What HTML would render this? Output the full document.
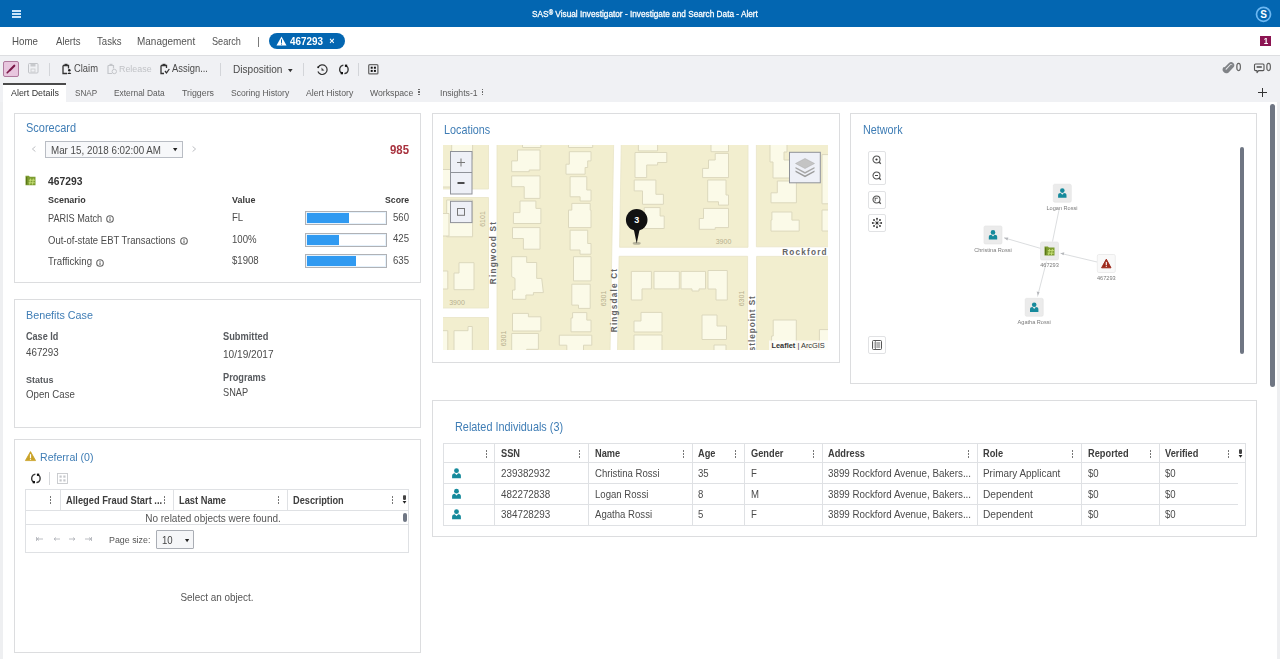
<!DOCTYPE html>
<html><head><meta charset="utf-8"><title>SAS Visual Investigator</title>
<style>
html,body{margin:0;padding:0;width:1280px;height:659px;overflow:hidden;background:#fff;}
body{position:relative;font-family:"Liberation Sans",sans-serif;}
.t{position:absolute;white-space:nowrap;line-height:1;will-change:transform;}
.r{position:absolute;box-sizing:border-box;}
svg.r{overflow:visible;}
</style></head><body>
<div class="r" style="left:0px;top:0px;width:1280px;height:27px;background:#0366b1;"></div>
<div class="r" style="left:0px;top:27px;width:1280px;height:28px;background:#fff;"></div>
<div class="r" style="left:0px;top:55px;width:1280px;height:47px;background:#f0f1f4;"></div>
<div class="r" style="left:0px;top:55px;width:1280px;height:1px;background:#dddee1;"></div>
<div class="r" style="left:0px;top:102px;width:3px;height:557px;background:#eeeff1;"></div>
<div class="r" style="left:1277px;top:102px;width:3px;height:557px;background:#eeeff1;"></div>
<div class="r" style="left:1270px;top:104px;width:5px;height:283px;background:#6f7683;border-radius:3px;"></div>
<div class="r" style="left:12px;top:10px;width:9px;height:2px;background:#c9e4fa;"></div>
<div class="r" style="left:12px;top:13px;width:9px;height:2px;background:#c9e4fa;"></div>
<div class="r" style="left:12px;top:16px;width:9px;height:2px;background:#c9e4fa;"></div>
<div class="t" style="left:644.60px;top:11.00px;font-size:8.25px;color:#ffffff;transform:translateX(-50%) scaleY(1.1);transform-origin:50% 6px;-webkit-text-stroke:0.25px #fff;">SAS<span style="font-size:6px;position:relative;top:-1.8px">®</span> Visual Investigator - Investigate and Search Data - Alert</div>
<svg class="r" style="left:1255px;top:5.5px;" width="17" height="17" viewBox="0 0 17 17"><circle cx="8.5" cy="8.3" r="7" fill="none" stroke="#6db8f2" stroke-width="1.7"/><text x="8.6" y="11.9" text-anchor="middle" font-family="Liberation Sans" font-weight="700" font-size="10" fill="#fff">S</text></svg>
<div class="t" style="left:12.00px;top:37.00px;font-size:9.75px;color:#525252;transform:scaleY(1.1);transform-origin:50% 8px;">Home</div>
<div class="t" style="left:55.50px;top:37.00px;font-size:9.6px;color:#525252;transform:scaleY(1.1);transform-origin:50% 8px;">Alerts</div>
<div class="t" style="left:96.50px;top:37.00px;font-size:9.6px;color:#525252;transform:scaleY(1.1);transform-origin:50% 8px;">Tasks</div>
<div class="t" style="left:136.50px;top:37.00px;font-size:9.97px;color:#525252;transform:scaleY(1.1);transform-origin:50% 8px;">Management</div>
<div class="t" style="left:211.50px;top:38.00px;font-size:9.15px;color:#525252;transform:scaleY(1.1);transform-origin:50% 7px;">Search</div>
<div class="r" style="left:258px;top:37px;width:1px;height:10px;background:#7a7a7a;"></div>
<div class="r" style="left:269px;top:33px;width:76px;height:16px;background:#0366b1;border-radius:8px;"></div>
<svg class="r" style="left:276px;top:36px;" width="11" height="10" viewBox="0 0 11 10"><path d="M5.5 0.5 L10.5 9.5 L0.5 9.5 Z" fill="#fff"/><rect x="5" y="3.3" width="1" height="3.6" fill="#0366b1"/><rect x="5" y="7.6" width="1" height="1" fill="#0366b1"/></svg>
<div class="t" style="left:290.00px;top:37.00px;font-size:9.89px;color:#fff;font-weight:700;transform:scaleY(1.1);transform-origin:50% 8px;">467293</div>
<div class="t" style="left:332.00px;top:37.00px;font-size:9px;color:#fff;font-weight:700;transform:translateX(-50%) scaleY(1.1);transform-origin:50% 7px;">×</div>
<div class="r" style="left:1260px;top:36px;width:11px;height:10px;background:#8c1452;"></div>
<div class="t" style="left:1265.50px;top:38.00px;font-size:8px;color:#fff;font-weight:700;transform:translateX(-50%) scaleY(1.1);transform-origin:50% 6px;">1</div>
<div class="r" style="left:3px;top:61px;width:16px;height:16px;background:#e8c6de;border:1px solid #b07a9e;border-radius:2px;"></div>
<svg class="r" style="left:5px;top:63px;" width="12" height="12" viewBox="0 0 12 12"><path d="M4.6 7.4 L9.3 2.7" stroke="#7b1848" stroke-width="2.1" stroke-linecap="round"/><path d="M2.2 9.8 L3.6 8.4" stroke="#7b1848" stroke-width="1.6" stroke-linecap="round"/></svg>
<svg class="r" style="left:28px;top:63px;" width="11" height="11" viewBox="0 0 11 11"><rect x="0.5" y="0.5" width="9.5" height="9.5" rx="1" fill="none" stroke="#c2c4c8" stroke-width="1"/><rect x="2.5" y="1" width="5" height="2.5" fill="#c8cacd"/><rect x="3" y="6" width="4" height="3" fill="none" stroke="#c8cacd" stroke-width="0.8"/></svg>
<div class="r" style="left:49px;top:63px;width:1px;height:13px;background:#d3d5d9;"></div>
<svg class="r" style="left:61px;top:63px;" width="11" height="12" viewBox="0 0 11 12"><path d="M2 2.5 H7.5 V5.5 M2 2.5 V10.5 H6" fill="none" stroke="#333" stroke-width="1.3"/><rect x="3.5" y="0.8" width="3" height="2" fill="#333"/><circle cx="8.3" cy="7.3" r="1.3" fill="#222"/><path d="M6.3 11 Q8.3 8.2 10.3 11 Z" fill="#222"/></svg>
<div class="t" style="left:74.20px;top:64.00px;font-size:9.4px;color:#4a4a4a;transform:scaleY(1.1);transform-origin:50% 8px;">Claim</div>
<svg class="r" style="left:106px;top:63px;" width="11" height="12" viewBox="0 0 11 12"><path d="M2 2.5 H7.5 V5.5 M2 2.5 V10.5 H6" fill="none" stroke="#c4c6ca" stroke-width="1.2"/><rect x="3.5" y="0.8" width="3" height="2" fill="#c4c6ca"/><circle cx="8.3" cy="8.5" r="2.2" fill="none" stroke="#c4c6ca" stroke-width="1"/></svg>
<div class="t" style="left:118.90px;top:65.00px;font-size:8.9px;color:#c0c2c6;transform:scaleY(1.1);transform-origin:50% 7px;">Release</div>
<svg class="r" style="left:159px;top:63px;" width="11" height="12" viewBox="0 0 11 12"><path d="M2 2.5 H7.5 V5 M2 2.5 V10.5 H5" fill="none" stroke="#333" stroke-width="1.3"/><rect x="3.5" y="0.8" width="3" height="2" fill="#333"/><path d="M6 8 L7.5 10 L10.3 6" fill="none" stroke="#333" stroke-width="1.3"/></svg>
<div class="t" style="left:171.90px;top:64.00px;font-size:9.4px;color:#4a4a4a;transform:scaleY(1.1);transform-origin:50% 8px;">Assign...</div>
<div class="r" style="left:220px;top:63px;width:1px;height:13px;background:#d3d5d9;"></div>
<div class="t" style="left:232.50px;top:65.00px;font-size:10.1px;color:#4a4a4a;transform:scaleY(1.1);transform-origin:50% 8px;">Disposition</div>
<svg class="r" style="left:287.5px;top:68.8px;" width="5" height="3.5" viewBox="0 0 5 3.5"><path d="M0 0 H4.6 L2.3 3.2 Z" fill="#333"/></svg>
<div class="r" style="left:303px;top:63px;width:1px;height:13px;background:#d3d5d9;"></div>
<svg class="r" style="left:316px;top:63px;" width="12" height="13" viewBox="0 0 12 13"><path d="M2.2 4.2 A4.8 4.8 0 1 1 1.9 8.6" fill="none" stroke="#333" stroke-width="1.2"/><circle cx="2.2" cy="4.2" r="1" fill="#222"/><path d="M5.4 4.6 L8.4 7.4 L5.6 7.8 Z" fill="#444"/></svg>
<svg class="r" style="left:337.5px;top:63px;" width="12" height="13" viewBox="0 0 12 13"><path d="M5.4 2.1 A4.3 4.3 0 0 0 3.8 10.1" fill="none" stroke="#3a3a3a" stroke-width="1.3"/><path d="M8 2.7 A4.3 4.3 0 0 1 6.4 10.7" fill="none" stroke="#3a3a3a" stroke-width="1.3"/><rect x="6.9" y="1.6" width="2.3" height="2.3" fill="#111"/><rect x="2.7" y="9" width="2.3" height="2.3" fill="#111"/></svg>
<div class="r" style="left:358px;top:63px;width:1px;height:13px;background:#d3d5d9;"></div>
<svg class="r" style="left:367.5px;top:64px;" width="11" height="11" viewBox="0 0 11 11"><rect x="0.7" y="0.7" width="9.2" height="9.2" rx="1" fill="none" stroke="#6a6a6a" stroke-width="1.3"/><rect x="2.7" y="2.7" width="2" height="2" fill="#111"/><rect x="5.9" y="2.7" width="2" height="2" fill="#111"/><rect x="2.7" y="5.9" width="2" height="2" fill="#111"/><rect x="5.9" y="5.9" width="2" height="2" fill="#111"/></svg>
<svg class="r" style="left:1223px;top:62px;" width="11" height="12" viewBox="0 0 11 12"><path d="M8.3 3.6 L4 8.4 A1.5 1.5 0 0 1 1.9 6.3 L6.6 1.6 A2.2 2.2 0 0 1 9.8 4.6 L4.8 9.9 A2.8 2.8 0 0 1 1 6" fill="none" stroke="#808387" stroke-width="1.9" stroke-linecap="round"/></svg>
<div class="t" style="left:1236.00px;top:63.00px;font-size:9.4px;color:#5a5a5a;transform:scaleY(1.1);transform-origin:50% 8px;-webkit-text-stroke:0.3px #5a5a5a;">0</div>
<svg class="r" style="left:1253.5px;top:62.5px;" width="12" height="11" viewBox="0 0 12 11"><path d="M1.5 1 H9 A1 1 0 0 1 10 2 V6.6 A1 1 0 0 1 9 7.6 H4.6 L3 9.6 V7.6 H1.5 A1 1 0 0 1 0.5 6.6 V2 A1 1 0 0 1 1.5 1 Z" fill="none" stroke="#555" stroke-width="1.1" stroke-linejoin="round"/><rect x="2.6" y="3.2" width="5.2" height="1.6" fill="#555"/></svg>
<div class="t" style="left:1266.00px;top:63.00px;font-size:9.4px;color:#5a5a5a;transform:scaleY(1.1);transform-origin:50% 8px;-webkit-text-stroke:0.3px #5a5a5a;">0</div>
<div class="r" style="left:3px;top:84px;width:63px;height:18px;background:#fff;"></div>
<div class="r" style="left:3px;top:83px;width:63px;height:1.6px;background:#4a4a4a;"></div>
<div class="t" style="left:11.20px;top:89.00px;font-size:8.9px;color:#333;transform:scaleY(1.1);transform-origin:50% 7px;">Alert Details</div>
<div class="t" style="left:75.00px;top:90.00px;font-size:8.1px;color:#5b5b5b;transform:scaleY(1.1);transform-origin:50% 6px;">SNAP</div>
<div class="t" style="left:114.00px;top:89.00px;font-size:8.37px;color:#5b5b5b;transform:scaleY(1.1);transform-origin:50% 7px;">External Data</div>
<div class="t" style="left:182.00px;top:89.00px;font-size:8.82px;color:#5b5b5b;transform:scaleY(1.1);transform-origin:50% 7px;">Triggers</div>
<div class="t" style="left:230.60px;top:89.00px;font-size:8.61px;color:#5b5b5b;transform:scaleY(1.1);transform-origin:50% 7px;">Scoring History</div>
<div class="t" style="left:306.00px;top:89.00px;font-size:8.7px;color:#5b5b5b;transform:scaleY(1.1);transform-origin:50% 7px;">Alert History</div>
<div class="t" style="left:370.00px;top:89.00px;font-size:8.7px;color:#5b5b5b;transform:scaleY(1.1);transform-origin:50% 7px;">Workspace</div>
<div class="t" style="left:440.00px;top:89.00px;font-size:8.7px;color:#5b5b5b;transform:scaleY(1.1);transform-origin:50% 7px;">Insights-1</div>
<div class="r" style="left:418px;top:88.5px;width:1.5px;height:1.6px;background:#6a6a6a;"></div>
<div class="r" style="left:418px;top:91.2px;width:1.5px;height:1.6px;background:#6a6a6a;"></div>
<div class="r" style="left:418px;top:93.9px;width:1.5px;height:1.6px;background:#6a6a6a;"></div>
<div class="r" style="left:481.5px;top:88.5px;width:1.5px;height:1.6px;background:#6a6a6a;"></div>
<div class="r" style="left:481.5px;top:91.2px;width:1.5px;height:1.6px;background:#6a6a6a;"></div>
<div class="r" style="left:481.5px;top:93.9px;width:1.5px;height:1.6px;background:#6a6a6a;"></div>
<div class="r" style="left:1258.3px;top:92.2px;width:9px;height:1.3px;background:#333;"></div>
<div class="r" style="left:1262.2px;top:88.3px;width:1.3px;height:9.2px;background:#333;"></div>
<div class="r" style="left:14px;top:113px;width:407px;height:170px;border:1px solid #dcdddf;background:#fff;"></div>
<div class="r" style="left:14px;top:299px;width:407px;height:129px;border:1px solid #dcdddf;background:#fff;"></div>
<div class="r" style="left:14px;top:439px;width:407px;height:214px;border:1px solid #dcdddf;background:#fff;"></div>
<div class="r" style="left:432px;top:113px;width:408px;height:250px;border:1px solid #dcdddf;background:#fff;"></div>
<div class="r" style="left:850px;top:113px;width:407px;height:271px;border:1px solid #dcdddf;background:#fff;"></div>
<div class="r" style="left:432px;top:400px;width:825px;height:137px;border:1px solid #dcdddf;background:#fff;"></div>
<div class="t" style="left:25.80px;top:123.00px;font-size:10.97px;color:#3f7db5;transform:scaleY(1.1);transform-origin:50% 9px;">Scorecard</div>
<div class="t" style="left:25.60px;top:310.00px;font-size:10.76px;color:#3f7db5;transform:scaleY(1.1);transform-origin:50% 9px;">Benefits Case</div>
<div class="t" style="left:39.50px;top:452.00px;font-size:10.58px;color:#3f7db5;transform:scaleY(1.1);transform-origin:50% 9px;">Referral (0)</div>
<div class="t" style="left:444.30px;top:125.00px;font-size:10.8px;color:#3f7db5;transform:scaleY(1.1);transform-origin:50% 9px;">Locations</div>
<div class="t" style="left:862.50px;top:125.00px;font-size:10.8px;color:#3f7db5;transform:scaleY(1.1);transform-origin:50% 9px;">Network</div>
<div class="t" style="left:455.30px;top:422.00px;font-size:10.86px;color:#3f7db5;transform:scaleY(1.1);transform-origin:50% 9px;">Related Individuals (3)</div>
<svg class="r" style="left:31px;top:145px;" width="6" height="9" viewBox="0 0 6 9"><path d="M4.4 1.5 L1.4 4 L4.4 6.5" fill="none" stroke="#bfc1c5" stroke-width="1"/></svg>
<svg class="r" style="left:191px;top:145px;" width="6" height="9" viewBox="0 0 6 9"><path d="M1.6 1.5 L4.6 4 L1.6 6.5" fill="none" stroke="#bfc1c5" stroke-width="1"/></svg>
<div class="r" style="left:45px;top:141px;width:138px;height:17px;background:#f7f8fa;border:1px solid #b9bdc4;"></div>
<div class="t" style="left:50.60px;top:146.00px;font-size:9.8px;color:#4a4a4a;transform:scaleY(1.1);transform-origin:50% 8px;">Mar 15, 2018 6:02:00 AM</div>
<svg class="r" style="left:173.2px;top:148.2px;" width="5" height="3.5" viewBox="0 0 5 3.5"><path d="M0 0 H4.4 L2.2 3.2 Z" fill="#222"/></svg>
<div class="t" style="right:871.40px;top:145.00px;font-size:11.39px;color:#a8323e;font-weight:700;transform:scaleY(1.1);transform-origin:50% 9px;">985</div>
<svg class="r" style="left:25px;top:174.5px;" width="11" height="11" viewBox="0 0 11 11"><path d="M0.5 0.8 H3.8 L4.8 1.8 H10.5 V10.2 H0.5 Z" fill="#7d9d30"/><path d="M1.6 2 V9.5" stroke="#5a7618" stroke-width="1.2"/><path d="M5.6 3.6 L4.6 9.6 M8.4 3.6 L7.4 9.6 M3.8 5.2 H10 M3.6 7.8 H9.8" stroke="#c9e27c" stroke-width="0.9"/></svg>
<div class="t" style="left:47.60px;top:177.00px;font-size:10.31px;color:#333;font-weight:700;transform:scaleY(1.1);transform-origin:50% 8px;">467293</div>
<div class="t" style="left:47.50px;top:196.00px;font-size:8.95px;color:#3a3a3a;font-weight:700;transform:scaleY(1.1);transform-origin:50% 7px;">Scenario</div>
<div class="t" style="left:231.70px;top:196.00px;font-size:8.95px;color:#3a3a3a;font-weight:700;transform:scaleY(1.1);transform-origin:50% 7px;">Value</div>
<div class="t" style="right:871.00px;top:196.00px;font-size:8.71px;color:#3a3a3a;font-weight:700;transform:scaleY(1.1);transform-origin:50% 7px;">Score</div>
<div class="t" style="left:47.50px;top:215.00px;font-size:9.14px;color:#4b4b4b;transform:scaleY(1.1);transform-origin:50% 7px;">PARIS Match</div>
<svg class="r" style="left:106.3px;top:215.1px;" width="8" height="8" viewBox="0 0 8 8"><circle cx="4" cy="4" r="3.3" fill="none" stroke="#666" stroke-width="1.1"/><rect x="3.5" y="3.4" width="1" height="2.6" fill="#555"/><rect x="3.5" y="1.9" width="1" height="0.9" fill="#555"/></svg>
<div class="t" style="left:231.70px;top:213.00px;font-size:9.6px;color:#4b4b4b;transform:scaleY(1.1);transform-origin:50% 8px;">FL</div>
<div class="r" style="left:305px;top:211px;width:82px;height:14px;background:#fff;border:1px solid #b0b2b6;box-shadow:inset 0 0 0 1px #e6f2fc;"></div>
<div class="r" style="left:307px;top:213px;width:42px;height:9.5px;background:#309af1;"></div>
<div class="t" style="right:871.00px;top:213.00px;font-size:9.6px;color:#4b4b4b;transform:scaleY(1.1);transform-origin:50% 8px;">560</div>
<div class="t" style="left:47.50px;top:236.00px;font-size:9.5px;color:#4b4b4b;transform:scaleY(1.1);transform-origin:50% 8px;">Out-of-state EBT Transactions</div>
<svg class="r" style="left:180px;top:237.0px;" width="8" height="8" viewBox="0 0 8 8"><circle cx="4" cy="4" r="3.3" fill="none" stroke="#666" stroke-width="1.1"/><rect x="3.5" y="3.4" width="1" height="2.6" fill="#555"/><rect x="3.5" y="1.9" width="1" height="0.9" fill="#555"/></svg>
<div class="t" style="left:231.70px;top:235.00px;font-size:9.6px;color:#4b4b4b;transform:scaleY(1.1);transform-origin:50% 8px;">100%</div>
<div class="r" style="left:305px;top:233px;width:82px;height:14px;background:#fff;border:1px solid #b0b2b6;box-shadow:inset 0 0 0 1px #e6f2fc;"></div>
<div class="r" style="left:307px;top:235px;width:32px;height:9.5px;background:#309af1;"></div>
<div class="t" style="right:871.00px;top:234.00px;font-size:9.6px;color:#4b4b4b;transform:scaleY(1.1);transform-origin:50% 8px;">425</div>
<div class="t" style="left:47.50px;top:257.00px;font-size:9.66px;color:#4b4b4b;transform:scaleY(1.1);transform-origin:50% 8px;">Trafficking</div>
<svg class="r" style="left:96px;top:258.8px;" width="8" height="8" viewBox="0 0 8 8"><circle cx="4" cy="4" r="3.3" fill="none" stroke="#666" stroke-width="1.1"/><rect x="3.5" y="3.4" width="1" height="2.6" fill="#555"/><rect x="3.5" y="1.9" width="1" height="0.9" fill="#555"/></svg>
<div class="t" style="left:231.70px;top:256.00px;font-size:9.6px;color:#4b4b4b;transform:scaleY(1.1);transform-origin:50% 8px;">$1908</div>
<div class="r" style="left:305px;top:254px;width:82px;height:14px;background:#fff;border:1px solid #b0b2b6;box-shadow:inset 0 0 0 1px #e6f2fc;"></div>
<div class="r" style="left:307px;top:256px;width:49px;height:9.5px;background:#309af1;"></div>
<div class="t" style="right:871.00px;top:256.00px;font-size:9.6px;color:#4b4b4b;transform:scaleY(1.1);transform-origin:50% 8px;">635</div>
<div class="t" style="left:25.60px;top:333.00px;font-size:9.08px;color:#575a5e;font-weight:700;transform:scaleY(1.1);transform-origin:50% 7px;">Case Id</div>
<div class="t" style="left:25.60px;top:348.00px;font-size:9.8px;color:#4b4b4b;transform:scaleY(1.1);transform-origin:50% 8px;">467293</div>
<div class="t" style="left:25.60px;top:376.00px;font-size:9.0px;color:#575a5e;font-weight:700;transform:scaleY(1.1);transform-origin:50% 7px;">Status</div>
<div class="t" style="left:25.60px;top:390.00px;font-size:9.67px;color:#4b4b4b;transform:scaleY(1.1);transform-origin:50% 8px;">Open Case</div>
<div class="t" style="left:223.30px;top:333.00px;font-size:9.27px;color:#575a5e;font-weight:700;transform:scaleY(1.1);transform-origin:50% 7px;">Submitted</div>
<div class="t" style="left:223.30px;top:350.00px;font-size:10.1px;color:#4b4b4b;transform:scaleY(1.1);transform-origin:50% 8px;">10/19/2017</div>
<div class="t" style="left:223.30px;top:374.00px;font-size:9.2px;color:#575a5e;font-weight:700;transform:scaleY(1.1);transform-origin:50% 7px;">Programs</div>
<div class="t" style="left:223.30px;top:389.00px;font-size:9.2px;color:#4b4b4b;transform:scaleY(1.1);transform-origin:50% 7px;">SNAP</div>
<svg class="r" style="left:25px;top:451px;" width="11" height="10" viewBox="0 0 11 10"><path d="M5.5 0.6 L10.6 9.6 L0.4 9.6 Z" fill="#c9a227" stroke="#c9a227" stroke-width="0.8" stroke-linejoin="round"/><rect x="4.9" y="3.2" width="1.2" height="3.8" fill="#fff"/><rect x="4.9" y="7.7" width="1.2" height="1.1" fill="#fff"/></svg>
<svg class="r" style="left:29.5px;top:472px;" width="12" height="13" viewBox="0 0 12 13"><path d="M5.4 2.1 A4.3 4.3 0 0 0 3.8 10.1" fill="none" stroke="#3a3a3a" stroke-width="1.3"/><path d="M8 2.7 A4.3 4.3 0 0 1 6.4 10.7" fill="none" stroke="#3a3a3a" stroke-width="1.3"/><rect x="6.9" y="1.6" width="2.3" height="2.3" fill="#111"/><rect x="2.7" y="9" width="2.3" height="2.3" fill="#111"/></svg>
<div class="r" style="left:49px;top:472px;width:1px;height:13px;background:#d6d8db;"></div>
<svg class="r" style="left:57px;top:473px;" width="11" height="11" viewBox="0 0 11 11"><rect x="0.5" y="0.5" width="10" height="10" fill="none" stroke="#c6c8cc" stroke-width="0.9"/><rect x="2.5" y="2.5" width="2.2" height="2.2" fill="#c6c8cc"/><rect x="6.3" y="2.5" width="2.2" height="2.2" fill="#c6c8cc"/><rect x="2.5" y="6.3" width="2.2" height="2.2" fill="#c6c8cc"/><rect x="6.3" y="6.3" width="2.2" height="2.2" fill="#c6c8cc"/></svg>
<div class="r" style="left:25px;top:489px;width:384px;height:64px;border:1px solid #dfe1e4;background:#fff;"></div>
<div class="r" style="left:26px;top:510px;width:382px;height:1px;background:#dfe1e4;"></div>
<div class="r" style="left:26px;top:524px;width:382px;height:1px;background:#dfe1e4;"></div>
<div class="r" style="left:60px;top:490px;width:1px;height:20px;background:#dfe1e4;"></div>
<div class="r" style="left:173px;top:490px;width:1px;height:20px;background:#dfe1e4;"></div>
<div class="r" style="left:287px;top:490px;width:1px;height:20px;background:#dfe1e4;"></div>
<div class="r" style="left:50px;top:496px;width:1px;height:2px;background:#777;"></div>
<div class="r" style="left:50px;top:499px;width:1px;height:2px;background:#777;"></div>
<div class="r" style="left:50px;top:502px;width:1px;height:2px;background:#777;"></div>
<div class="r" style="left:164px;top:496px;width:1px;height:2px;background:#777;"></div>
<div class="r" style="left:164px;top:499px;width:1px;height:2px;background:#777;"></div>
<div class="r" style="left:164px;top:502px;width:1px;height:2px;background:#777;"></div>
<div class="r" style="left:278px;top:496px;width:1px;height:2px;background:#777;"></div>
<div class="r" style="left:278px;top:499px;width:1px;height:2px;background:#777;"></div>
<div class="r" style="left:278px;top:502px;width:1px;height:2px;background:#777;"></div>
<div class="r" style="left:392px;top:496px;width:1px;height:2px;background:#777;"></div>
<div class="r" style="left:392px;top:499px;width:1px;height:2px;background:#777;"></div>
<div class="r" style="left:392px;top:502px;width:1px;height:2px;background:#777;"></div>
<svg class="r" style="left:402px;top:494px;" width="6" height="11" viewBox="0 0 6 11"><rect x="1" y="1.3" width="3" height="4.6" rx="0.8" fill="#444"/><path d="M0.6 7 H4.4 L2.5 9.8 Z" fill="#222"/></svg>
<div class="t" style="left:66.00px;top:497.00px;font-size:9.3px;color:#3d3d3d;font-weight:700;transform:scaleY(1.1);transform-origin:50% 7px;">Alleged Fraud Start ...</div>
<div class="t" style="left:179.40px;top:497.00px;font-size:9.3px;color:#3d3d3d;font-weight:700;transform:scaleY(1.1);transform-origin:50% 7px;">Last Name</div>
<div class="t" style="left:293.30px;top:497.00px;font-size:9.22px;color:#3d3d3d;font-weight:700;transform:scaleY(1.1);transform-origin:50% 7px;">Description</div>
<div class="t" style="left:213.40px;top:514.00px;font-size:10.0px;color:#555;transform:translateX(-50%) scaleY(1.1);transform-origin:50% 8px;">No related objects were found.</div>
<div class="r" style="left:402.5px;top:513px;width:4px;height:9px;background:#6f7683;border-radius:2px;"></div>
<svg class="r" style="left:36px;top:537px;" width="8" height="4" viewBox="0 0 8 4"><path d="M0.5 0 V4 M1 2 H7 M1 2 L3 0.5 M1 2 L3 3.5" fill="none" stroke="#b4b7bc" stroke-width="0.9"/></svg>
<svg class="r" style="left:53px;top:537px;" width="8" height="4" viewBox="0 0 8 4"><path d="M1 2 H7 M1 2 L3 0.5 M1 2 L3 3.5" fill="none" stroke="#b4b7bc" stroke-width="0.9"/></svg>
<svg class="r" style="left:69px;top:537px;" width="8" height="4" viewBox="0 0 8 4"><path d="M0 2 H6 M6 2 L4 0.5 M6 2 L4 3.5" fill="none" stroke="#b4b7bc" stroke-width="0.9"/></svg>
<svg class="r" style="left:85px;top:537px;" width="8" height="4" viewBox="0 0 8 4"><path d="M0 2 H6 M6 2 L4 0.5 M6 2 L4 3.5 M6.5 0 V4" fill="none" stroke="#b4b7bc" stroke-width="0.9"/></svg>
<div class="t" style="left:108.60px;top:536.00px;font-size:8.87px;color:#555;transform:scaleY(1.1);transform-origin:50% 7px;">Page size:</div>
<div class="r" style="left:156px;top:530px;width:38px;height:19px;background:#f5f6f8;border:1px solid #a9adb4;border-radius:1px;"></div>
<div class="t" style="left:162.00px;top:536.00px;font-size:9.6px;color:#444;transform:scaleY(1.1);transform-origin:50% 8px;">10</div>
<svg class="r" style="left:185px;top:539.3px;" width="5" height="4" viewBox="0 0 5 4"><path d="M0 0 H4.2 L2.1 3.2 Z" fill="#222"/></svg>
<div class="t" style="left:216.90px;top:593.00px;font-size:9.9px;color:#555;transform:translateX(-50%) scaleY(1.1);transform-origin:50% 8px;">Select an object.</div>
<svg class="r" style="left:443px;top:145px;overflow:hidden;" width="385" height="205" viewBox="443 145 385 205"><style>.k{fill:#f2eecf;stroke:#e8e4c6;stroke-width:0.8}.b{fill:#fbfae8;stroke:#dcd8bd;stroke-width:1}.mt{font-family:"Liberation Sans";fill:#b6ae8e;font-size:7px}.st{font-family:"Liberation Sans";fill:#646464;font-size:8.2px;font-weight:700;letter-spacing:1.2px}</style><rect x="443" y="145" width="385" height="205" fill="#ffffff"/><polygon class="k" points="440,142 488.5,142 488.5,189 440,189"/><polygon class="k" points="440,197.5 488.5,197.5 488.5,308 440,308"/><polygon class="k" points="440,317.5 488.5,317.5 488.5,353 440,353"/><polygon class="k" points="497,142 613.7,142 610,353 497,353"/><polygon class="k" points="621.3,142 748,142 748,247.3 619.6,247.3"/><polygon class="k" points="619.1,256.3 747.6,256.3 747.6,353 617.5,353"/><polygon class="k" points="756.4,142 831,142 831,246.8 756.4,246.8"/><polygon class="k" points="756.6,256.4 831,256.4 831,353 756.6,353"/><polygon class="b" points="451.7,142 472.6,142 472.6,159.2 451.7,159.2"/><polygon class="b" points="440,169.5 450.5,169.5 450.5,187 440,187"/><polygon class="b" points="446.7,200 472.6,200 472.6,236.8 446.7,236.8"/><polygon class="b" points="440,213.5 449,213.5 449,236 440,236"/><polygon class="b" points="459,262.7 474,262.7 474,289.7 454,289.7 454,273 459,273"/><polygon class="b" points="440,271 447.8,271 447.8,289 440,289"/><polygon class="b" points="454,330.7 468,330.7 468,326.5 472.3,326.5 472.3,353 454,353"/><polygon class="b" points="440,330.7 447.8,330.7 447.8,353 440,353"/><polygon class="b" points="522.5,142 540.9,142 540.9,147.5 522.5,147.5"/><polygon class="b" points="517.5,150 540,150 540,170 529.2,170 529.2,171.7 511.7,171.7 511.7,160.9 517.5,160.9"/><polygon class="b" points="511.7,175.9 540,175.9 540,198.4 524.2,198.4 524.2,186.7 511.7,186.7"/><polygon class="b" points="520,201 535.9,201 535.9,208.4 540.9,208.4 540.9,223.5 513.4,223.5 513.4,212.6 520,212.6"/><polygon class="b" points="512.5,227.6 540,227.6 540,249.2 523.4,249.2 523.4,238.5 512.5,238.5"/><polygon class="b" points="511.7,256.7 526.7,256.7 526.7,262.5 536.7,262.5 536.7,278.4 541.7,278.4 543.4,292.6 533.4,292.6 533.4,295 525.9,295 525.9,299.3 512.5,299.3 512.5,290 515,290 515,278.4 511.7,276.7"/><polygon class="b" points="512.5,313.4 528.4,313.4 528.4,316.8 540.9,316.8 540.9,331 512.5,331"/><polygon class="b" points="511.7,333.5 538.4,333.5 538.4,349.3 526.7,349.3 526.7,353 511.7,353"/><polygon class="b" points="568.5,142 592.7,142 592.7,147.5 568.5,147.5"/><polygon class="b" points="569.3,151.7 591,151.7 591,160.9 587.7,160.9 587.7,167.5 585.1,167.5 585.1,174.2 566,174.2 566,164.2 569.3,164.2"/><polygon class="b" points="570.1,176.7 586.8,176.7 586.8,190 591,190 591,201 580.1,201 580.1,196.8 570.1,196.8"/><polygon class="b" points="571.8,203.4 590.2,203.4 590.2,210.1 591,210.1 591,227.6 568.5,227.6 568.5,210.1 571.8,210.1"/><polygon class="b" points="570.1,230.2 587.7,230.2 587.7,243.5 591,243.5 591,254.2 580,254.2 580,250 570.1,250"/><polygon class="b" points="573.5,256.7 591,256.7 591,280.9 573.5,280.9"/><polygon class="b" points="571.8,284.2 590.2,284.2 590.2,308.4 578.5,308.4 578.5,305.1 571.8,305.1"/><polygon class="b" points="572.6,312.6 586.8,312.6 586.8,320.1 591,320.1 591,331.8 571,331.8 571,318 572.6,318"/><polygon class="b" points="559.3,335.2 591.8,335.2 591.8,345.2 583.5,345.2 583.5,353 566.8,353 566.8,345.2 559.3,345.2"/><polygon class="b" points="638.4,142 657.6,142 657.6,150.9 638.4,150.9"/><polygon class="b" points="635,152.5 666.8,152.5 666.8,162.5 657.6,162.5 657.6,165 646.7,165 646.7,177.6 635,177.6"/><polygon class="b" points="634.2,180 655.9,180 655.9,194.3 663.4,194.3 663.4,204.3 642.5,204.3 642.5,190.9 634.2,190.9"/><polygon class="b" points="644.2,207.6 660.1,207.6 660.1,216 664.2,216 664.2,228.5 644.2,228.5"/><polygon class="b" points="711,142 728.5,142 728.5,151.7 711,151.7"/><polygon class="b" points="715.2,153.4 728.5,153.4 728.5,177.6 702.6,177.6 702.6,168.4 708.5,168.4 708.5,160 715.2,160"/><polygon class="b" points="707.7,180 726,180 726,195 728.5,195 728.5,205.1 718.5,205.1 718.5,201.8 707.7,201.8"/><polygon class="b" points="703.5,208.4 728.5,208.4 728.5,227.6 715.2,227.6 715.2,229.3 699.3,229.3 699.3,218.5 703.5,218.5"/><polygon class="b" points="631.3,271.4 651.4,271.4 651.4,288.9 642,288.9 642,300 631.3,300"/><polygon class="b" points="654,271.4 679.3,271.4 679.3,288.9 654,288.9"/><polygon class="b" points="681,271.4 705.5,271.4 705.5,288.9 699,288.9 699,291 692,291 692,288.9 681,288.9"/><polygon class="b" points="708,270.5 727.3,270.5 727.3,300 716,300 716,289 708,289"/><polygon class="b" points="641,312.4 662,312.4 662,332 634,332 634,321 641,321"/><polygon class="b" points="634,335 662,335 662,353 634,353"/><polygon class="b" points="702,315 717,315 717,326 726.5,326 726.5,339.5 702,339.5"/><polygon class="b" points="714,345 726,345 726,353 714,353"/><polygon class="b" points="770,142 787,142 787,152 784,152 784,160 790,160 790,178 773,178 773,162 770,162"/><polygon class="b" points="777.3,181 796.4,181 796.4,202.8 771,202.8 771,192.8 777.3,192.8"/><polygon class="b" points="771.9,212 791.9,212 791.9,220.1 799.2,220.1 799.2,231.1 771,231.1 771,220 771.9,220"/><polygon class="b" points="822,154.6 831,154.6 831,203.8 822,203.8"/><polygon class="b" points="822,210 831,210 831,231 822,231"/><polygon class="b" points="773.2,320 796.3,320 796.3,353 771.6,353 771.6,336 773.2,336"/><polygon class="b" points="819.4,329.6 831,329.6 831,353 819.4,353"/><text class="mt" x="457" y="304.5" text-anchor="middle">3900</text><text class="mt" x="723.5" y="243.5" text-anchor="middle">3900</text><text class="mt" x="482.6" y="219" text-anchor="middle" dominant-baseline="central" transform="rotate(-90 482.6 219)">6101</text><text class="mt" x="503.7" y="338.5" text-anchor="middle" dominant-baseline="central" transform="rotate(-90 503.7 338.5)">6301</text><text class="mt" x="603.5" y="298.4" text-anchor="middle" dominant-baseline="central" transform="rotate(-90 603.5 298.4)">6301</text><text class="mt" x="741.7" y="298.5" text-anchor="middle" dominant-baseline="central" transform="rotate(-90 741.7 298.5)">6301</text><text class="st" x="493.1" y="252.5" text-anchor="middle" dominant-baseline="central" transform="rotate(-90 493.1 252.5)">Ringwood St</text><text class="st" x="614" y="300" text-anchor="middle" dominant-baseline="central" transform="rotate(-90 614 300)">Ringsdale Ct</text><text class="st" style="letter-spacing:0.95px" x="752.6" y="295.2" text-anchor="end" dominant-baseline="central" transform="rotate(-90 752.6 295.2)">Castlepoint St</text><text class="st" x="827.8" y="255" text-anchor="end">Rockford</text><rect x="769" y="340.5" width="59" height="9.5" fill="#fff" fill-opacity="0.75"/><text x="771.5" y="348" font-family="Liberation Sans" font-size="7.4" fill="#333"><tspan font-weight="700">Leaflet</tspan> | ArcGIS</text><ellipse cx="636.7" cy="243.3" rx="4" ry="1.5" fill="#000" fill-opacity="0.25"/><path d="M636.7 243.5 L633.3 227 Q636.7 229 640.1 227 Z" fill="#111"/><circle cx="636.7" cy="219.8" r="10.8" fill="#111"/><text x="636.7" y="223.2" text-anchor="middle" font-family="Liberation Sans" font-weight="700" font-size="9" fill="#fff">3</text><rect x="450.5" y="151.5" width="21.5" height="42.5" fill="#eef0f7" stroke="#8f9299" stroke-width="1"/><line x1="450.5" y1="172.5" x2="472" y2="172.5" stroke="#8f9299" stroke-width="1"/><path d="M457 162.5 H465 M461 158.5 V166.5" stroke="#777" stroke-width="1"/><path d="M457.5 183 H464.5" stroke="#222" stroke-width="1.6"/><rect x="450.5" y="201.3" width="21.5" height="21.3" fill="#eef0f7" stroke="#8f9299" stroke-width="1"/><rect x="457.5" y="208.5" width="7" height="6.8" fill="none" stroke="#777" stroke-width="1"/><rect x="789.5" y="152.3" width="30.8" height="30.5" fill="#eef0f7" stroke="#8f9299" stroke-width="1"/><path d="M795.5 170.5 L805 175.5 L814.5 170.5 L814.5 172 L805 177.2 L795.5 172 Z" fill="#9a9a9a"/><path d="M795.5 167 L805 172 L814.5 167 L814.5 168.5 L805 173.7 L795.5 168.5 Z" fill="#a8a8a8"/><path d="M795.5 163.5 L805 158.5 L814.5 163.5 L805 168.5 Z" fill="#c4c4c4" stroke="#a9a9a9" stroke-width="0.5"/></svg>
<div class="r" style="left:868px;top:151px;width:18px;height:34px;background:#fff;border:1px solid #e1e2e4;border-radius:2px;"></div>
<div class="r" style="left:868px;top:191px;width:18px;height:18px;background:#fff;border:1px solid #e1e2e4;border-radius:2px;"></div>
<div class="r" style="left:868px;top:214px;width:18px;height:18px;background:#fff;border:1px solid #e1e2e4;border-radius:2px;"></div>
<div class="r" style="left:868px;top:336px;width:18px;height:18px;background:#fff;border:1px solid #e1e2e4;border-radius:2px;"></div>
<svg class="r" style="left:871px;top:153.5px;" width="12" height="12" viewBox="0 0 12 12"><circle cx="5.5" cy="5.5" r="3.5" fill="none" stroke="#505050" stroke-width="1.05"/><path d="M8 8 L9.8 9.8" stroke="#505050" stroke-width="1.3"/><circle cx="5.5" cy="5.5" r="1.1" fill="#333"/></svg>
<svg class="r" style="left:871px;top:169.5px;" width="12" height="12" viewBox="0 0 12 12"><circle cx="5.5" cy="5.5" r="3.5" fill="none" stroke="#505050" stroke-width="1.05"/><path d="M8 8 L9.8 9.8" stroke="#505050" stroke-width="1.3"/><path d="M4 5.5 H7" stroke="#444" stroke-width="1"/></svg>
<svg class="r" style="left:871px;top:193.5px;" width="12" height="12" viewBox="0 0 12 12"><circle cx="5.5" cy="5.5" r="3.5" fill="none" stroke="#505050" stroke-width="1.05"/><path d="M8 8 L9.8 9.8" stroke="#505050" stroke-width="1.3"/><path d="M3.8 4.2 H6.8 M4.2 4 V7.2" stroke="#444" stroke-width="0.8"/></svg>
<svg class="r" style="left:871px;top:217px;" width="12" height="12" viewBox="0 0 12 12"><g stroke="#8a8a8a" stroke-width="0.7"><path d="M6 2 V10 M2 6 H10 M3.2 3.2 L8.8 8.8 M8.8 3.2 L3.2 8.8"/></g><g fill="#333"><circle cx="6" cy="1.8" r="0.95"/><circle cx="6" cy="10.2" r="0.95"/><circle cx="1.8" cy="6" r="0.95"/><circle cx="10.2" cy="6" r="0.95"/><circle cx="3" cy="3" r="0.9"/><circle cx="9" cy="9" r="0.9"/><circle cx="9" cy="3" r="0.9"/><circle cx="3" cy="9" r="0.9"/><circle cx="6" cy="6" r="1.2"/></g></svg>
<svg class="r" style="left:871px;top:339px;" width="12" height="12" viewBox="0 0 12 12"><rect x="1.5" y="1.5" width="9" height="9" rx="1" fill="none" stroke="#444" stroke-width="0.9"/><path d="M4.4 2 V10" stroke="#555" stroke-width="0.7"/><path d="M2.8 4 H3.6 M2.8 6 H3.6 M2.8 8 H3.6 M5.3 4 H9.2 M5.3 6 H9.2 M5.3 8 H9.2" stroke="#444" stroke-width="0.8"/></svg>
<div class="r" style="left:1239.5px;top:147px;width:4.3px;height:207px;background:#6f7683;border-radius:2.5px;"></div>
<svg class="r" style="left:0px;top:0px;" width="1280" height="659" viewBox="0 0 1280 659"><g stroke="#d2d4d7" stroke-width="0.8" fill="none"><path d="M1059 210 L1052.5 241.5"/><path d="M1041 248.5 L1004 237.8"/><path d="M1097 262 L1060.5 253.3"/><path d="M1046.5 261.5 L1037.5 296.5"/></g><g fill="#b5b7bb"><path d="M1004 237.8 L1008.3 237.6 L1007.4 240.4 Z"/><path d="M1060.5 253.3 L1064.3 252.3 L1063.6 255.2 Z"/><path d="M1037.8 295.5 L1036.7 291.6 L1039.6 292.3 Z"/></g></svg>
<svg class="r" style="left:0px;top:0px;" width="1280" height="659" viewBox="0 0 1280 659"><rect x="1053.3" y="184.2" width="18" height="18" rx="1.5" fill="#ebebeb" stroke="#e2e2e2" stroke-width="0.6"/><circle cx="1062.3" cy="190.6" r="2.3" fill="#168a9c"/><path d="M1058.1 197.79999999999998 V195.39999999999998 Q1058.1 193.0 1060.7 193.0 L1062.3 194.79999999999998 L1063.8999999999999 193.0 Q1066.5 193.0 1066.5 195.39999999999998 V197.79999999999998 Z" fill="#168a9c"/><rect x="984" y="226" width="18" height="18" rx="1.5" fill="#ebebeb" stroke="#e2e2e2" stroke-width="0.6"/><circle cx="993" cy="232.4" r="2.3" fill="#168a9c"/><path d="M988.8 239.6 V237.2 Q988.8 234.8 991.4 234.8 L993 236.6 L994.6 234.8 Q997.2 234.8 997.2 237.2 V239.6 Z" fill="#168a9c"/><rect x="1025.2" y="298.3" width="18" height="18" rx="1.5" fill="#ebebeb" stroke="#e2e2e2" stroke-width="0.6"/><circle cx="1034.2" cy="304.7" r="2.3" fill="#168a9c"/><path d="M1030.0 311.90000000000003 V309.5 Q1030.0 307.1 1032.6000000000001 307.1 L1034.2 308.90000000000003 L1035.8 307.1 Q1038.4 307.1 1038.4 309.5 V311.90000000000003 Z" fill="#168a9c"/><rect x="1040.5" y="242" width="18" height="18" rx="1.5" fill="#ebebeb" stroke="#e2e2e2" stroke-width="0.6"/><path d="M1044.5 246.4 H1047.9 L1048.9 247.4 H1054.5 V255.6 H1044.5 Z" fill="#7d9d30"/><path d="M1045.6 247.6 V254.9" stroke="#5a7618" stroke-width="1.2"/><path d="M1049.6 249 L1048.6 255 M1052.4 249 L1051.4 255 M1047.8 250.6 H1054.0 M1047.6 253.2 H1053.8" stroke="#c9e27c" stroke-width="0.9"/><rect x="1097.3" y="254.5" width="18" height="18" rx="1.5" fill="#f9f9f9" stroke="#e2e2e2" stroke-width="0.6"/><path d="M1106.3 259.2 L1111.0 267.8 H1101.6 Z" fill="#9e2a1c" stroke="#9e2a1c" stroke-width="1" stroke-linejoin="round"/><rect x="1105.75" y="261.9" width="1.1" height="3.2" fill="#fff"/><rect x="1105.75" y="265.8" width="1.1" height="1.1" fill="#fff"/><text x="1062" y="209.5" text-anchor="middle" font-family="Liberation Sans" font-size="5.6" fill="#7a7a7a">Logan Rossi</text><text x="993" y="252.3" text-anchor="middle" font-family="Liberation Sans" font-size="5.6" fill="#7a7a7a">Christina Rossi</text><text x="1049.5" y="266.6" text-anchor="middle" font-family="Liberation Sans" font-size="5.6" fill="#7a7a7a">467293</text><text x="1106.3" y="279.6" text-anchor="middle" font-family="Liberation Sans" font-size="5.6" fill="#7a7a7a">467293</text><text x="1034.2" y="324" text-anchor="middle" font-family="Liberation Sans" font-size="5.6" fill="#7a7a7a">Agatha Rossi</text></svg>
<div class="r" style="left:443px;top:443px;width:803px;height:83px;border:1px solid #dfe1e4;background:#fff;"></div>
<div class="r" style="left:444px;top:462px;width:801px;height:1px;background:#dfe1e4;"></div>
<div class="r" style="left:444px;top:483px;width:794px;height:1px;background:#dfe1e4;"></div>
<div class="r" style="left:444px;top:504px;width:794px;height:1px;background:#dfe1e4;"></div>
<div class="r" style="left:494px;top:444px;width:1px;height:81px;background:#dfe1e4;"></div>
<div class="r" style="left:588px;top:444px;width:1px;height:81px;background:#dfe1e4;"></div>
<div class="r" style="left:692px;top:444px;width:1px;height:81px;background:#dfe1e4;"></div>
<div class="r" style="left:744px;top:444px;width:1px;height:81px;background:#dfe1e4;"></div>
<div class="r" style="left:822px;top:444px;width:1px;height:81px;background:#dfe1e4;"></div>
<div class="r" style="left:977px;top:444px;width:1px;height:81px;background:#dfe1e4;"></div>
<div class="r" style="left:1081px;top:444px;width:1px;height:81px;background:#dfe1e4;"></div>
<div class="r" style="left:1159px;top:444px;width:1px;height:81px;background:#dfe1e4;"></div>
<div class="r" style="left:486px;top:450px;width:1px;height:2px;background:#777;"></div>
<div class="r" style="left:486px;top:453px;width:1px;height:2px;background:#777;"></div>
<div class="r" style="left:486px;top:456px;width:1px;height:2px;background:#777;"></div>
<div class="t" style="left:501.00px;top:450.00px;font-size:9.26px;color:#3d3d3d;font-weight:700;transform:scaleY(1.1);transform-origin:50% 7px;">SSN</div>
<div class="r" style="left:579px;top:450px;width:1px;height:2px;background:#777;"></div>
<div class="r" style="left:579px;top:453px;width:1px;height:2px;background:#777;"></div>
<div class="r" style="left:579px;top:456px;width:1px;height:2px;background:#777;"></div>
<div class="t" style="left:594.50px;top:450.00px;font-size:9.26px;color:#3d3d3d;font-weight:700;transform:scaleY(1.1);transform-origin:50% 7px;">Name</div>
<div class="r" style="left:683px;top:450px;width:1px;height:2px;background:#777;"></div>
<div class="r" style="left:683px;top:453px;width:1px;height:2px;background:#777;"></div>
<div class="r" style="left:683px;top:456px;width:1px;height:2px;background:#777;"></div>
<div class="t" style="left:698.40px;top:450.00px;font-size:9.26px;color:#3d3d3d;font-weight:700;transform:scaleY(1.1);transform-origin:50% 7px;">Age</div>
<div class="r" style="left:735px;top:450px;width:1px;height:2px;background:#777;"></div>
<div class="r" style="left:735px;top:453px;width:1px;height:2px;background:#777;"></div>
<div class="r" style="left:735px;top:456px;width:1px;height:2px;background:#777;"></div>
<div class="t" style="left:750.80px;top:450.00px;font-size:9.26px;color:#3d3d3d;font-weight:700;transform:scaleY(1.1);transform-origin:50% 7px;">Gender</div>
<div class="r" style="left:813px;top:450px;width:1px;height:2px;background:#777;"></div>
<div class="r" style="left:813px;top:453px;width:1px;height:2px;background:#777;"></div>
<div class="r" style="left:813px;top:456px;width:1px;height:2px;background:#777;"></div>
<div class="t" style="left:828.30px;top:450.00px;font-size:9.26px;color:#3d3d3d;font-weight:700;transform:scaleY(1.1);transform-origin:50% 7px;">Address</div>
<div class="r" style="left:968px;top:450px;width:1px;height:2px;background:#777;"></div>
<div class="r" style="left:968px;top:453px;width:1px;height:2px;background:#777;"></div>
<div class="r" style="left:968px;top:456px;width:1px;height:2px;background:#777;"></div>
<div class="t" style="left:983.40px;top:450.00px;font-size:9.26px;color:#3d3d3d;font-weight:700;transform:scaleY(1.1);transform-origin:50% 7px;">Role</div>
<div class="r" style="left:1072px;top:450px;width:1px;height:2px;background:#777;"></div>
<div class="r" style="left:1072px;top:453px;width:1px;height:2px;background:#777;"></div>
<div class="r" style="left:1072px;top:456px;width:1px;height:2px;background:#777;"></div>
<div class="t" style="left:1087.60px;top:450.00px;font-size:9.26px;color:#3d3d3d;font-weight:700;transform:scaleY(1.1);transform-origin:50% 7px;">Reported</div>
<div class="r" style="left:1150px;top:450px;width:1px;height:2px;background:#777;"></div>
<div class="r" style="left:1150px;top:453px;width:1px;height:2px;background:#777;"></div>
<div class="r" style="left:1150px;top:456px;width:1px;height:2px;background:#777;"></div>
<div class="t" style="left:1165.00px;top:450.00px;font-size:9.26px;color:#3d3d3d;font-weight:700;transform:scaleY(1.1);transform-origin:50% 7px;">Verified</div>
<div class="r" style="left:1228px;top:450px;width:1px;height:2px;background:#777;"></div>
<div class="r" style="left:1228px;top:453px;width:1px;height:2px;background:#777;"></div>
<div class="r" style="left:1228px;top:456px;width:1px;height:2px;background:#777;"></div>
<svg class="r" style="left:1238px;top:448px;" width="6" height="11" viewBox="0 0 6 11"><rect x="1" y="1.3" width="3" height="4.6" rx="0.8" fill="#444"/><path d="M0.6 7 H4.4 L2.5 9.8 Z" fill="#222"/></svg>
<div class="t" style="left:501.00px;top:469.00px;font-size:9.85px;color:#4b4b4b;transform:scaleY(1.1);transform-origin:50% 8px;">239382932</div>
<div class="t" style="left:594.50px;top:469.00px;font-size:9.6px;color:#4b4b4b;transform:scaleY(1.1);transform-origin:50% 8px;">Christina Rossi</div>
<div class="t" style="left:698.40px;top:469.00px;font-size:9.6px;color:#4b4b4b;transform:scaleY(1.1);transform-origin:50% 8px;">35</div>
<div class="t" style="left:750.80px;top:469.00px;font-size:9.6px;color:#4b4b4b;transform:scaleY(1.1);transform-origin:50% 8px;">F</div>
<div class="t" style="left:828.30px;top:469.00px;font-size:9.8px;color:#4b4b4b;transform:scaleY(1.1);transform-origin:50% 8px;">3899 Rockford Avenue, Bakers...</div>
<div class="t" style="left:983.40px;top:469.00px;font-size:9.94px;color:#4b4b4b;transform:scaleY(1.1);transform-origin:50% 8px;">Primary Applicant</div>
<div class="t" style="left:1087.60px;top:469.00px;font-size:9.6px;color:#4b4b4b;transform:scaleY(1.1);transform-origin:50% 8px;">$0</div>
<div class="t" style="left:1165.00px;top:469.00px;font-size:9.6px;color:#4b4b4b;transform:scaleY(1.1);transform-origin:50% 8px;">$0</div>
<div class="t" style="left:501.00px;top:490.00px;font-size:9.85px;color:#4b4b4b;transform:scaleY(1.1);transform-origin:50% 8px;">482272838</div>
<div class="t" style="left:594.50px;top:490.00px;font-size:9.6px;color:#4b4b4b;transform:scaleY(1.1);transform-origin:50% 8px;">Logan Rossi</div>
<div class="t" style="left:698.40px;top:490.00px;font-size:9.6px;color:#4b4b4b;transform:scaleY(1.1);transform-origin:50% 8px;">8</div>
<div class="t" style="left:750.80px;top:490.00px;font-size:9.6px;color:#4b4b4b;transform:scaleY(1.1);transform-origin:50% 8px;">M</div>
<div class="t" style="left:828.30px;top:490.00px;font-size:9.8px;color:#4b4b4b;transform:scaleY(1.1);transform-origin:50% 8px;">3899 Rockford Avenue, Bakers...</div>
<div class="t" style="left:983.40px;top:490.00px;font-size:10.2px;color:#4b4b4b;transform:scaleY(1.1);transform-origin:50% 8px;">Dependent</div>
<div class="t" style="left:1087.60px;top:490.00px;font-size:9.6px;color:#4b4b4b;transform:scaleY(1.1);transform-origin:50% 8px;">$0</div>
<div class="t" style="left:1165.00px;top:490.00px;font-size:9.6px;color:#4b4b4b;transform:scaleY(1.1);transform-origin:50% 8px;">$0</div>
<div class="t" style="left:501.00px;top:510.00px;font-size:9.85px;color:#4b4b4b;transform:scaleY(1.1);transform-origin:50% 8px;">384728293</div>
<div class="t" style="left:594.50px;top:510.00px;font-size:9.6px;color:#4b4b4b;transform:scaleY(1.1);transform-origin:50% 8px;">Agatha Rossi</div>
<div class="t" style="left:698.40px;top:510.00px;font-size:9.6px;color:#4b4b4b;transform:scaleY(1.1);transform-origin:50% 8px;">5</div>
<div class="t" style="left:750.80px;top:510.00px;font-size:9.6px;color:#4b4b4b;transform:scaleY(1.1);transform-origin:50% 8px;">F</div>
<div class="t" style="left:828.30px;top:510.00px;font-size:9.8px;color:#4b4b4b;transform:scaleY(1.1);transform-origin:50% 8px;">3899 Rockford Avenue, Bakers...</div>
<div class="t" style="left:983.40px;top:510.00px;font-size:10.2px;color:#4b4b4b;transform:scaleY(1.1);transform-origin:50% 8px;">Dependent</div>
<div class="t" style="left:1087.60px;top:510.00px;font-size:9.6px;color:#4b4b4b;transform:scaleY(1.1);transform-origin:50% 8px;">$0</div>
<div class="t" style="left:1165.00px;top:510.00px;font-size:9.6px;color:#4b4b4b;transform:scaleY(1.1);transform-origin:50% 8px;">$0</div>
<svg class="r" style="left:0px;top:0px;" width="1280" height="659" viewBox="0 0 1280 659"><circle cx="456.5" cy="470.66999999999996" r="2.415" fill="#168a9c"/><path d="M452.09 478.22999999999996 V475.71 Q452.09 473.19 454.82 473.19 L456.5 475.08 L458.18 473.19 Q460.91 473.19 460.91 475.71 V478.22999999999996 Z" fill="#168a9c"/><circle cx="456.5" cy="491.16999999999996" r="2.415" fill="#168a9c"/><path d="M452.09 498.72999999999996 V496.21 Q452.09 493.69 454.82 493.69 L456.5 495.58 L458.18 493.69 Q460.91 493.69 460.91 496.21 V498.72999999999996 Z" fill="#168a9c"/><circle cx="456.5" cy="511.66999999999996" r="2.415" fill="#168a9c"/><path d="M452.09 519.23 V516.7099999999999 Q452.09 514.1899999999999 454.82 514.1899999999999 L456.5 516.0799999999999 L458.18 514.1899999999999 Q460.91 514.1899999999999 460.91 516.7099999999999 V519.23 Z" fill="#168a9c"/></svg>
</body></html>
